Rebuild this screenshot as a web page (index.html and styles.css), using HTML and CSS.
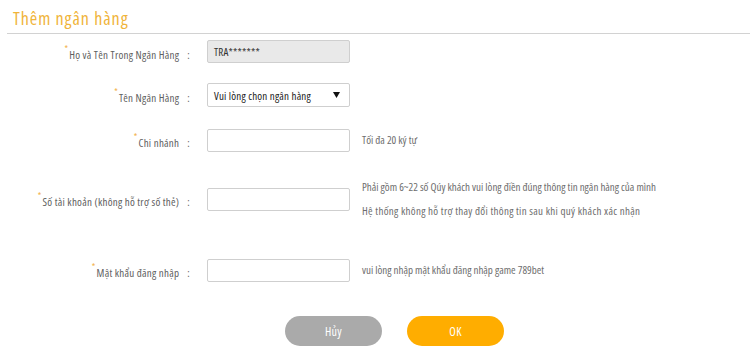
FILE: index.html
```html
<!DOCTYPE html>
<html lang="vi">
<head>
<meta charset="utf-8">
<title>Thêm ngân hàng</title>
<link rel="stylesheet" href="styles.css">
</head>
<body>
<div class="page">
  <header class="head">
    <h1 class="title">Thêm ngân hàng</h1>
  </header>
  <form class="form">
    <div class="row r1">
      <label class="lbl"><span class="req">*</span>Họ và Tên Trong Ngân Hàng<span class="colon">:</span></label>
      <div class="field"><div class="inp disabled">TRA*******</div></div>
    </div>
    <div class="row r2">
      <label class="lbl"><span class="req">*</span>Tên Ngân Hàng<span class="colon">:</span></label>
      <div class="field">
        <div class="inp select">
          <span>Vui lòng chọn ngân hàng</span>
          <svg class="caret" width="7" height="6" viewBox="0 0 7 6"><polygon points="0,0 7,0 3.5,6" fill="#111"/></svg>
        </div>
      </div>
    </div>
    <div class="row r3">
      <label class="lbl"><span class="req">*</span>Chi nhánh<span class="colon">:</span></label>
      <div class="field"><div class="inp"></div></div>
      <div class="hint"><p>Tối đa 20 ký tự</p></div>
    </div>
    <div class="row r4">
      <label class="lbl"><span class="req">*</span>Số tài khoản (không hỗ trợ số thẻ)<span class="colon">:</span></label>
      <div class="field"><div class="inp"></div></div>
      <div class="hint">
        <p>Phải gồm 6~22 số Qúy khách vui lòng điền đúng thông tin ngân hàng của mình</p>
        <p class="wide">Hệ thống không hỗ trợ thay đổi thông tin sau khi quý khách xác nhận</p>
      </div>
    </div>
    <div class="row r5">
      <label class="lbl"><span class="req">*</span>Mật khẩu đăng nhập<span class="colon">:</span></label>
      <div class="field"><div class="inp"></div></div>
      <div class="hint"><p>vui lòng nhập mật khẩu đăng nhập game 789bet</p></div>
    </div>
    <div class="actions">
      <button type="button" class="btn cancel">Hủy</button>
      <button type="button" class="btn ok">OK</button>
    </div>
  </form>
</div>
</body>
</html>
```

FILE: styles.css
```css
* { box-sizing: border-box; }
html, body { margin: 0; padding: 0; background: #fff; }
body {
  font-family: "Open Sans", "Liberation Sans", Arial, sans-serif;
  font-stretch: 75%;
  color: #555;
  width: 750px;
  height: 358px;
  overflow: hidden;
}
.head {
  margin-left: 7px;
  padding: 7px 0 3px 6px;
  border-bottom: 1px solid #d2d2d2;
}
.title {
  margin: 0;
  font-size: 18px;
  line-height: 23px;
  font-weight: normal;
  letter-spacing: 0.95px;
  color: #f0b43a;
}
.form {
  padding-top: 6px;
}
.row {
  display: flex;
  align-items: center;
}
.r2 { margin-top: 20px; }
.r3 { margin-top: 21px; }
.r4 { margin-top: 23px; }
.r5 { margin-top: 35px; }
.lbl {
  width: 190px;
  flex: none;
  text-align: right;
  font-size: 11px;
  letter-spacing: 0.25px;
  color: #606060;
  white-space: nowrap;
}
.req {
  color: #f2b04a;
  font-size: 9px;
  vertical-align: 7px;
  margin-right: 1px;
}
.colon { margin-left: 8px; }
.field {
  margin-left: 17px;
  flex: none;
}
.inp {
  width: 143px;
  height: 23px;
  border: 1px solid #cfcfcf;
  border-radius: 2px;
  background: #fff;
  font-size: 11px;
  letter-spacing: 0.2px;
  color: #333;
  padding: 0 6px;
  display: flex;
  align-items: center;
  white-space: nowrap;
}
.inp.disabled { background: #e9e9e9; }
.inp.select {
  height: 24px;
  justify-content: space-between;
  padding: 0 9px 0 6px;
  color: #222;
}
.caret { display: block; }
.hint {
  margin-left: 12px;
  font-size: 11px;
  color: #6e6e6e;
}
.hint p {
  margin: 0;
  line-height: 24px;
  white-space: nowrap;
}
.hint .wide { letter-spacing: 0.3px; }
.actions {
  display: flex;
  gap: 25px;
  padding-left: 285px;
  margin-top: 34px;
}
.btn {
  width: 97px;
  height: 30px;
  border: 0;
  border-radius: 15px;
  color: #fff;
  font-family: inherit;
  font-stretch: 75%;
  font-size: 12px;
  letter-spacing: 0.3px;
  padding: 0;
}
.cancel { background: #aaaaaa; }
.ok { background: #ffad00; }
```
